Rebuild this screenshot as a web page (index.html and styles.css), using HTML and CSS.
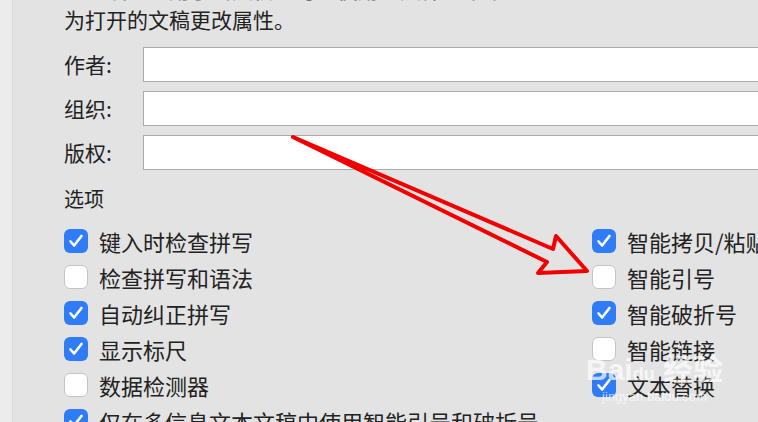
FILE: index.html
```html
<html>
	<head>
		<meta charset="utf-8">
		<link rel="stylesheet" href="styles.css">
	</head>
	<body>
		<div class="panel">
			<div class="intro cut">这些设置适用于新文稿。可以使用“文件”菜单</div>
			<div class="intro">为打开的文稿更改属性。</div>
			<div class="fields">
				<label>作者:</label><div class="field"></div>
				<label>组织:</label><div class="field"></div>
				<label>版权:</label><div class="field"></div>
			</div>
			<div class="section">选项</div>
			<div class="options">
				<div class="opt"><span class="box on"></span>键入时检查拼写</div>
				<div class="opt"><span class="box on"></span>智能拷贝/粘贴</div>
				<div class="opt"><span class="box"></span>检查拼写和语法</div>
				<div class="opt"><span class="box"></span>智能引号</div>
				<div class="opt"><span class="box on"></span>自动纠正拼写</div>
				<div class="opt"><span class="box on"></span>智能破折号</div>
				<div class="opt"><span class="box on"></span>显示标尺</div>
				<div class="opt"><span class="box"></span>智能链接</div>
				<div class="opt"><span class="box"></span>数据检测器</div>
				<div class="opt"><span class="box on"></span>文本替换</div>
				<div class="opt wide"><span class="box on"></span>仅在多信息文本文稿中使用智能引号和破折号</div>
			</div>
		</div>
		<svg class="arrow" width="758" height="422" viewBox="0 0 758 422">
			<polygon points="293,137 553,249 556,236 587,271 538,273 547,262" fill="none" stroke="#f20000" stroke-width="4" stroke-linejoin="round"/>
		</svg>
		<div class="mark">
			<div class="mark-logo">Bai<span class="paw">du</span> 经验</div>
			<div class="mark-url">jingyan.baidu.com</div>
		</div>
	</body>
</html>
```

FILE: styles.css
```css
body {
	margin: 0;
	height: 422px;
	overflow: hidden;
	background-color: #ececec;
	font-family: "Noto Sans CJK SC", "Noto Sans", sans-serif;
	color: #222;
}

.panel {
	margin-left: 12px;
	height: 422px;
	background-color: #e3e3e3;
	border-left: 1px solid #dadada;
	padding-left: 51px;
	overflow: hidden;
}

.intro {
	font-size: 21px;
	line-height: 30px;
	height: 30px;
	white-space: nowrap;
}

.intro.cut {
	margin-top: -26px;
	color: #555;
}

.fields {
	display: grid;
	grid-template-columns: 79px 700px;
	grid-auto-rows: 35px;
	row-gap: 9px;
	margin-top: 13px;
	align-items: center;
}

.fields label {
	font-size: 21px;
	line-height: 35px;
}

.field {
	height: 35px;
	box-sizing: border-box;
	background-color: #fff;
	border: 1px solid #ababab;
}

.section {
	font-size: 20px;
	line-height: 30px;
	margin-top: 14px;
}

.options {
	display: grid;
	grid-template-columns: 528px 300px;
	grid-auto-rows: 36px;
	margin-top: 9px;
}

.opt {
	display: flex;
	align-items: center;
	font-size: 22px;
	height: 36px;
	white-space: nowrap;
	gap: 11px;
}

.opt.wide {
	grid-column: 1 / 3;
}

.box {
	width: 24px;
	height: 24px;
	box-sizing: border-box;
	border-radius: 6px;
	background-color: #fff;
	border: 1px solid #c4c4c4;
	flex: none;
}

.box.on {
	border: none;
	background-color: #2f7cf6;
	background-image: url("data:image/svg+xml,%3Csvg xmlns='http://www.w3.org/2000/svg' viewBox='0 0 24 24'%3E%3Cpath d='M6.5 12.5l3.6 4L17.5 7' fill='none' stroke='white' stroke-width='2.6' stroke-linecap='round' stroke-linejoin='round'/%3E%3C/svg%3E");
}

.arrow {
	position: absolute;
	left: 0;
	top: 0;
	pointer-events: none;
}

.mark {
	position: absolute;
	left: 586px;
	top: 354px;
	color: rgba(255, 255, 255, 0.7);
	text-align: center;
}

.mark-logo {
	font-family: "Liberation Sans", "Noto Sans CJK SC", sans-serif;
	font-weight: bold;
	font-size: 30px;
	line-height: 32px;
}

.paw {
	font-size: 18px;
}

.mark-url {
	font-family: "Liberation Sans", sans-serif;
	font-size: 13px;
	line-height: 14px;
}
```
